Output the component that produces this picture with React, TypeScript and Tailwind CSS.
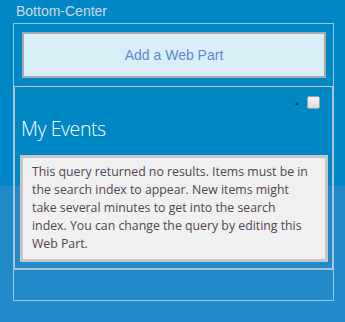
export default function App() {
  return (
    <div
      className="w-[345px] h-[322px] overflow-hidden bg-[linear-gradient(to_bottom,#0088c6_186px,#2389cb_186px)]"
      style={{ fontFamily: '"Liberation Sans", Arial, sans-serif' }}
    >
      {/* Zone label */}
      <div className="h-[23px] pl-[16px] pt-[3px] text-[14px] leading-[17px] text-[#cfd8e0]">
        Bottom-Center
      </div>

      {/* Zone box */}
      <div className="ml-[13px] w-[321px] h-[278px] border border-[#8ec9ea] flex flex-col">
        {/* Add web part */}
        <div className="mt-[8px] ml-[8px] w-[304px] h-[46px] border-2 border-[#a8a8a8] bg-[#daeef7] flex items-center justify-center text-[14px] text-[#5a8ad0]">
          Add a Web Part
        </div>

        {/* Web part */}
        <div className="mt-[8px] w-[319px] h-[183px] border border-[#c4c4c4] flex flex-col">
          <div className="h-[22px] flex items-end justify-end pr-[12px]">
            <div className="mr-[9px] mb-[4px] w-0 h-0 border-l-[3px] border-l-transparent border-b-[3px] border-b-[#1a2a3a]" />
            <div className="w-[13px] h-[13px] rounded-[2px] border border-[#9aa0a6] bg-[linear-gradient(to_bottom,#f4f4f4,#dcdcdc)]" />
          </div>
          <div
            className="mt-[6px] pl-[6px] h-[35px] text-[19.5px] leading-[28px] font-light tracking-[-0.4px] text-white"
            style={{ fontFamily: '"Open Sans", "Noto Sans", sans-serif' }}
          >
            My Events
          </div>
          <div
            className="mt-[5px] ml-[5px] w-[308px] border-[3px] border-[#c6c6c6] bg-[#f0f0f0] pl-[9px] pr-[13px] pt-[5px] pb-[6px] text-[12.3px] leading-[18px] text-[#544452]"
            style={{ fontFamily: '"Open Sans", "Noto Sans", sans-serif' }}
          >
            This query returned no results. Items must be in the search index to appear. New items might take several minutes to get into the search index. You can change the query by editing this Web Part.
          </div>
        </div>

        <div className="flex-1 border-t border-[#8ec9ea]" />
      </div>
    </div>
  );
}
